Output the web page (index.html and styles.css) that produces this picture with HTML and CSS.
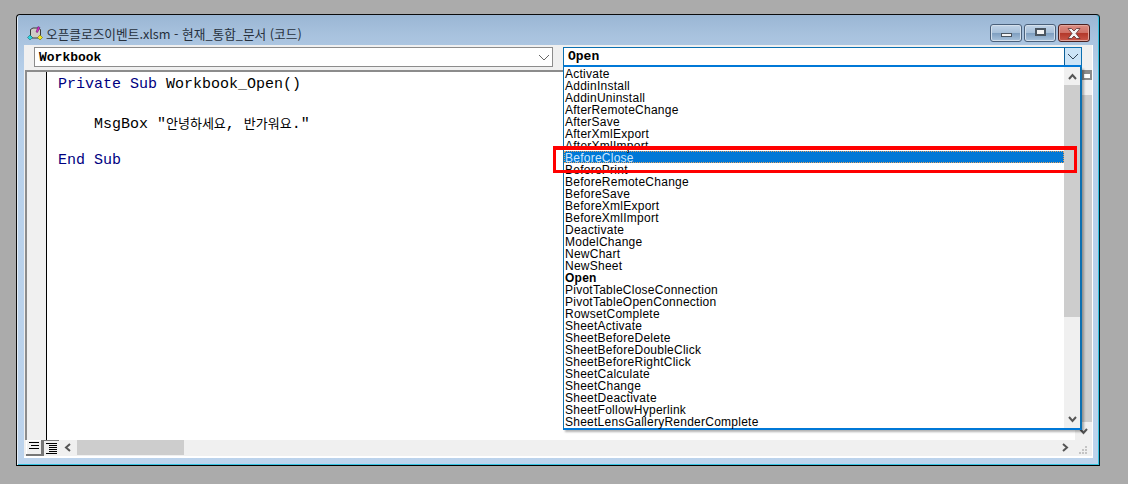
FILE: index.html
```html
<!DOCTYPE html>
<html lang="ko">
<head>
<meta charset="utf-8">
<title>VBA</title>
<link rel="stylesheet" href="styles.css">
</head>
<body>
<div class="window">
  <div class="titlebar">
    <svg class="appicon" width="16" height="16" viewBox="0 0 16 16"><path d="M3.500 4.500L6 3h5l2.500 1.500v6L11 13H5l-1.500-2.500z" fill="#cfcbc6" stroke="#3c3c3c" stroke-width="1"/><path d="M9 7L11 1.500l2 1L10.500 7.500z" fill="#d428c8" stroke="#5a1a60" stroke-width=".5"/><path d="M3 10l2.500 2.500L3 15 .5 12.500z" fill="#28d4e0" stroke="#155" stroke-width=".5"/><path d="M13 10l2.500 2.500L13 15l-2.500-2.500z" fill="#f4e81c" stroke="#550" stroke-width=".5"/></svg>
    <span class="title">오픈클로즈이벤트.xlsm - 현재_통합_문서 (코드)</span>
    <div class="winbtns">
      <div class="winbtn"><span class="g-min"></span></div>
      <div class="winbtn"><span class="g-max"></span></div>
      <div class="winbtn close"><svg width="16" height="11" viewBox="0 0 16 11"><path d="M2 .5h3.500L8 3l2.500-2.500H14L10 5.500l4 5h-3.500L8 8l-2.500 2.500H2l4-5z" fill="#f4f4f4" stroke="#5a3030" stroke-width=".8"/></svg></div>
    </div>
  </div>
  <div class="client">
    <div class="combos">
      <div class="combo left"><span class="ctext">Workbook</span><span class="carrow"><svg width="12" height="7" viewBox="0 0 12 7"><path d="M1 1l5 5 5-5" fill="none" stroke="#666" stroke-width="1"/></svg></span></div>
      <div class="combo right"><span class="ctext">Open</span><span class="carrow"><svg width="12" height="7" viewBox="0 0 12 7"><path d="M1 1l5 5 5-5" fill="none" stroke="#345" stroke-width="1"/></svg></span></div>
    </div>
    <div class="editor">
      <div class="gutter"></div>
      <div class="code">
        <div class="line"><span class="kw">Private Sub</span> Workbook_Open()</div>
        <div class="line"></div>
        <div class="line">    MsgBox "<span class="ko">안녕하세요</span>, <span class="ko">반가워요</span>."</div>
        <div class="line"></div>
        <div class="line"><span class="kw">End Sub</span></div>
      </div>
      <div class="vscroll">
        <div class="splitter"></div>
        <div class="sb-btn"></div>
        <div class="sb-track"></div>
        <div class="sb-btn low"><svg width="9" height="7" viewBox="0 0 9 7"><path d="M1 1l3.500 4L8 1" fill="none" stroke="#555" stroke-width="2"/></svg></div>
      </div>
    </div>
    <div class="bottom">
      <div class="viewbtn on"><svg width="11" height="8" viewBox="0 0 11 8" shape-rendering="crispEdges"><path d="M1 .5h10M3 3.500h8M1 6.500h10" stroke="#000" fill="none"/></svg></div>
      <div class="viewbtn"><svg width="11" height="11" viewBox="0 0 11 11" shape-rendering="crispEdges"><path d="M0 .5h11M3 2.500h8M3 4.500h8M3 6.500h8M3 8.500h8M0 10.500h11" stroke="#000" fill="none"/></svg></div>
      <div class="hscroll">
        <span class="harrow"><svg width="8" height="9" viewBox="0 0 8 9"><path d="M6 1L2 4.500 6 8" fill="none" stroke="#555" stroke-width="2"/></svg></span>
        <span class="hthumb"></span>
        <span class="hfill"></span>
        <span class="harrow"><svg width="8" height="9" viewBox="0 0 8 9"><path d="M2 1l4 3.500L2 8" fill="none" stroke="#555" stroke-width="2"/></svg></span>
      </div>
      <svg class="grip" width="10" height="10" viewBox="0 0 10 10" shape-rendering="crispEdges"><path d="M7 1h2v2H7zM4 4h2v2H4zM7 4h2v2H7zM1 7h2v2H1zM4 7h2v2H4zM7 7h2v2H7z" fill="#c4c4c4"/></svg>
    </div>
  </div>
</div>

<div class="dropdown">
  <ul class="list">
    <li>Activate</li><li>AddinInstall</li><li>AddinUninstall</li><li>AfterRemoteChange</li><li>AfterSave</li><li>AfterXmlExport</li><li>AfterXmlImport</li>
    <li class="sel">BeforeClose</li>
    <li>BeforePrint</li><li>BeforeRemoteChange</li><li>BeforeSave</li><li>BeforeXmlExport</li><li>BeforeXmlImport</li><li>Deactivate</li><li>ModelChange</li><li>NewChart</li><li>NewSheet</li>
    <li class="bold">Open</li>
    <li>PivotTableCloseConnection</li><li>PivotTableOpenConnection</li><li>RowsetComplete</li><li>SheetActivate</li><li>SheetBeforeDelete</li><li>SheetBeforeDoubleClick</li><li>SheetBeforeRightClick</li><li>SheetCalculate</li><li>SheetChange</li><li>SheetDeactivate</li><li>SheetFollowHyperlink</li><li>SheetLensGalleryRenderComplete</li>
  </ul>
  <div class="dd-scroll">
    <span class="dd-btn"><svg width="9" height="7" viewBox="0 0 9 7"><path d="M1 6l3.500-4L8 6" fill="none" stroke="#555" stroke-width="2"/></svg></span>
    <span class="dd-thumb"></span>
    <span class="dd-rest"></span>
    <span class="dd-btn"><svg width="9" height="7" viewBox="0 0 9 7"><path d="M1 1l3.500 4L8 1" fill="none" stroke="#555" stroke-width="2"/></svg></span>
  </div>
</div>
<div class="redbox"></div>
</body>
</html>
```
FILE: styles.css
```css
* { box-sizing: border-box; }
html, body { margin: 0; height: 100%; }
body { background: #ababab; padding: 14px 0 0 16px; position: relative; overflow: hidden; width: 1128px; height: 484px; }
.window {
  width: 1084px; height: 452px;
  border: 1px solid #0b0b0b; border-radius: 4px 4px 0 0;
  border-right-color: #05222c; border-bottom-color: #000;
  background: linear-gradient(#9ab6d4 0, #a8c2de 20px, #b7d0ea 60px, #bcd3ec 100%);
  box-shadow: inset 1px 0 0 #e6eef6, inset -1px 0 0 #36c2e0, inset 0 -1px 0 #36c2e0;
  padding: 0 6px 7px 7px;
  display: flex; flex-direction: column;
}
.titlebar { height: 30px; display: flex; align-items: center; padding: 6px 3px 0 3px; flex: none; }
.appicon { flex: none; }
.title { font: 12.7px "Noto Sans CJK KR", sans-serif; color: #26303c; margin-left: 3px; white-space: nowrap; }
.winbtns { margin-left: auto; display: flex; gap: 2px; align-self: flex-start; margin-top: 3px; }
.winbtn {
  width: 32px; height: 18px; border: 1px solid #4a607a; border-radius: 3px;
  background: linear-gradient(#c2d4e8 0, #a6bfd8 50%, #7f9fc0 52%, #a9c3dc 100%);
  box-shadow: inset 0 0 0 1px #d4e0ec;
  display: flex; align-items: center; justify-content: center;
}
.winbtn.close { border-color: #4a2020; background: linear-gradient(#dc8e84 0, #cf6f64 50%, #b3382a 52%, #c9584a 100%); box-shadow: inset 0 0 0 1px #e2a69c; }
.g-min { width: 11px; height: 4px; background: #f4f4f4; border: 1px solid #4a5560; margin-top: 4px; }
.g-max { width: 11px; height: 8px; background: #f4f4f4; border: 2px solid #4a5560; margin-top: -2px; }
.client { flex: 1; min-height: 0; background: #f0f0f0; border-bottom: 2px solid #fff; border-right: 1px solid #fff; display: flex; flex-direction: column; }
.combos { height: 25px; display: flex; gap: 10px; padding: 2px 0 0 10px; flex: none; }
.combo { height: 20px; width: 519px; flex: none; background: #fff; border: 1px solid #8c8c8c; display: flex; align-items: center; }
.combo.right { border-color: #0b6fb0; border-bottom: 2px solid #0078d7; }
.ctext { font: bold 13px "Liberation Mono", monospace; color: #000; padding-left: 4px; flex: 1; }
.carrow { width: 17px; height: 100%; display: flex; align-items: center; justify-content: center; }
.combo.right .carrow { border-left: 1px solid #0b5f98; background: #cce4f7; }
.editor { flex: 1; min-height: 0; display: flex; margin-left: 1px; border-top: 2px solid #8c8c8c; border-left: 2px solid #8c8c8c; background: #fff; }
.gutter { width: 20px; background: #f0f0f0; border-right: 1px solid #000; flex: none; }
.code { flex: 1; font: 15px/19px "Liberation Mono", monospace; color: #000; padding: 3px 0 0 11px; }
.kw { color: #00007f; }
.ko { font-family: "Noto Sans CJK KR", sans-serif; font-size: 13px; }
.line { height: 19px; white-space: pre; }
.vscroll { width: 17px; background: #f0f0f0; flex: none; display: flex; flex-direction: column; }
.splitter { height: 8px; margin-left: 7px; background: #fff; border: 2px solid #8c8c8c; flex: none; }
.sb-btn { height: 15px; flex: none; display: flex; align-items: center; justify-content: center; }
.sb-btn.low { height: 18px; padding-top: 0; }
.sb-track { flex: 1; background: #cdcdcd; }
.bottom { height: 16px; display: flex; align-items: flex-start; flex: none; padding-left: 2px; }
.viewbtn { width: 16px; height: 16px; display: flex; align-items: center; justify-content: center; background: #f0f0f0; border: 1px solid #777; border-width: 1px 0 0 1px; flex: none; }
.viewbtn.on { width: 17px; border: 0; border-right: 2px solid #777; border-bottom: 2px solid #777; box-shadow: inset 1px 1px 0 #fff; align-items: flex-start; padding-top: 2px; }
.hscroll { flex: 1; height: 15px; display: flex; align-items: center; background: #f0f0f0; }
.harrow { width: 18px; height: 15px; display: flex; align-items: center; justify-content: center; flex: none; }
.hthumb { width: 107px; height: 15px; background: #cdcdcd; }
.hfill { flex: 1; }
.grip { flex: none; margin: 5px 4px 0 4px; }
.dropdown {
  position: absolute; left: 563px; top: 67px; width: 519px; height: 363px;
  background: #fff; border: 1px solid #0b6fb0; border-bottom: 2px solid #0078d7; border-right: 2px solid #0b6fb0; border-top: 0;
  box-shadow: 2px 2px 2px rgba(0,0,0,.3);
  display: flex;
}
.list { list-style: none; margin: 0; padding: 0; flex: 1; min-width: 0; }
.list li { height: 12px; font: 12px/14px "Liberation Sans", sans-serif; letter-spacing: .25px; color: #000; padding-left: 1px; white-space: nowrap; }
.list li.sel { background: #0078d7; color: #cfe8ff; outline: 1px dotted #e0a060; outline-offset: -1px; }
.list li.bold { font-weight: bold; }
.dd-scroll { width: 16px; flex: none; display: flex; flex-direction: column; background: #f0f0f0; }
.dd-btn { height: 18px; display: flex; align-items: center; justify-content: center; flex: none; }
.dd-thumb { height: 232px; background: #cdcdcd; }
.dd-rest { flex: 1; }
.redbox { position: absolute; left: 553px; top: 146px; width: 524px; height: 27px; border: 3px solid #f00; border-top-width: 4px; }
```
